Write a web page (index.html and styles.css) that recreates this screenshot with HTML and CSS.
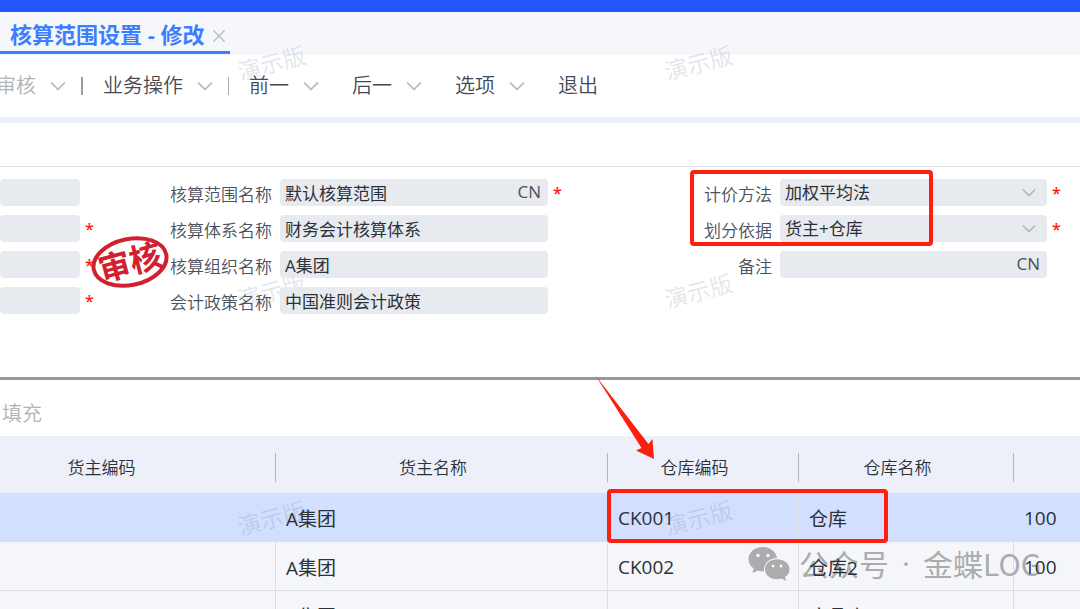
FILE: index.html
```
<!DOCTYPE html>
<html lang="zh-CN">

<head>
  <meta charset="UTF-8">
  <meta name="viewport" content="width=device-width, initial-scale=1.0">
  <title>核算范围设置 - 修改</title>
  <link rel="stylesheet" href="styles.css">
</head>

<body>
  <svg class="symbols" aria-hidden="true">
    <symbol id="chevron" viewBox="0 0 16 10">
      <path d="M1 1.5 L8 8.5 L15 1.5" fill="none" stroke="currentColor" stroke-width="1.8" />
    </symbol>
  </svg>

  <div class="topbar"></div>

  <nav class="tabs">
    <div class="tab">
      <a href="#" class="tab-title">核算范围设置 - 修改</a>
      <button type="button" class="tab-close" aria-label="关闭">
        <svg viewBox="0 0 12 12" width="12" height="12">
          <path d="M0.5 0.5 L11.5 11.5 M11.5 0.5 L0.5 11.5" stroke="currentColor" stroke-width="1.3" />
        </svg>
      </button>
    </div>
  </nav>

  <div class="toolbar">
    <button type="button" class="tool disabled">审核<svg class="chevron"><use href="#chevron" /></svg></button>
    <span class="sep dark"></span>
    <button type="button" class="tool">业务操作<svg class="chevron"><use href="#chevron" /></svg></button>
    <span class="sep"></span>
    <button type="button" class="tool">前一<svg class="chevron"><use href="#chevron" /></svg></button>
    <button type="button" class="tool">后一<svg class="chevron"><use href="#chevron" /></svg></button>
    <button type="button" class="tool">选项<svg class="chevron"><use href="#chevron" /></svg></button>
    <button type="button" class="tool">退出</button>
  </div>

  <main>
    <form class="form">
      <div class="form-col codes">
        <div class="field"><div class="box"><input type="text" aria-label="核算范围编码" readonly></div></div>
        <div class="field"><div class="box"><input type="text" aria-label="核算体系编码" readonly></div><span class="star">*</span></div>
        <div class="field"><div class="box"><input type="text" aria-label="核算组织编码" readonly></div><span class="star">*</span></div>
        <div class="field"><div class="box"><input type="text" aria-label="会计政策编码" readonly></div><span class="star">*</span></div>
      </div>

      <div class="form-col names">
        <div class="field">
          <label for="scope">核算范围名称</label>
          <div class="box"><input type="text" id="scope" value="默认核算范围" readonly><button type="button" class="lang">CN</button></div>
          <span class="star">*</span>
        </div>
        <div class="field">
          <label for="system">核算体系名称</label>
          <div class="box"><input type="text" id="system" value="财务会计核算体系" readonly></div>
        </div>
        <div class="field">
          <label for="org">核算组织名称</label>
          <div class="box"><input type="text" id="org" value="A集团" readonly></div>
        </div>
        <div class="field">
          <label for="policy">会计政策名称</label>
          <div class="box"><input type="text" id="policy" value="中国准则会计政策" readonly></div>
        </div>
      </div>

      <div class="form-col options">
        <div class="field">
          <label for="method">计价方法</label>
          <div class="box">
            <select id="method"><option>加权平均法</option></select>
            <svg class="chevron"><use href="#chevron" /></svg>
          </div>
          <span class="star">*</span>
        </div>
        <div class="field">
          <label for="basis">划分依据</label>
          <div class="box">
            <select id="basis"><option>货主+仓库</option></select>
            <svg class="chevron"><use href="#chevron" /></svg>
          </div>
          <span class="star">*</span>
        </div>
        <div class="field">
          <label for="remark">备注</label>
          <div class="box"><input type="text" id="remark" readonly><button type="button" class="lang">CN</button></div>
        </div>
      </div>
    </form>

    <section class="entries">
      <div class="entry-tools">
        <button type="button" class="tool disabled">填充</button>
      </div>
      <table>
        <colgroup>
          <col class="c-owner-code">
          <col class="c-owner-name">
          <col class="c-wh-code">
          <col class="c-wh-name">
          <col class="c-org">
        </colgroup>
        <thead>
          <tr>
            <th>货主编码</th>
            <th>货主名称</th>
            <th>仓库编码</th>
            <th>仓库名称</th>
            <th></th>
          </tr>
        </thead>
        <tbody>
          <tr class="selected">
            <td></td>
            <td><span>A集团</span></td>
            <td><span>CK001</span></td>
            <td><span>仓库</span></td>
            <td><span>100</span></td>
          </tr>
          <tr>
            <td></td>
            <td><span>A集团</span></td>
            <td><span>CK002</span></td>
            <td><span>仓库2</span></td>
            <td><span>100</span></td>
          </tr>
          <tr>
            <td></td>
            <td><span>A集团</span></td>
            <td><span>CK003</span></td>
            <td><span>废品库</span></td>
            <td><span>100</span></td>
          </tr>
        </tbody>
      </table>
    </section>
  </main>

  <!-- demo watermark -->
  <span class="watermark left row1">演示版</span>
  <span class="watermark right row1">演示版</span>
  <span class="watermark left row2">演示版</span>
  <span class="watermark right row2">演示版</span>
  <span class="watermark left row3">演示版</span>
  <span class="watermark right row3">演示版</span>

  <!-- audit stamp -->
  <svg class="stamp" viewBox="0 0 80 54" width="80" height="54">
    <ellipse cx="40" cy="27" rx="37" ry="23" fill="none" stroke="#d3202f" stroke-width="4" transform="rotate(-12 40 27)" />
    <text x="40" y="39" text-anchor="middle" transform="rotate(-15 40 27)">审核</text>
  </svg>

  <!-- annotations -->
  <div class="mark mark-form"></div>
  <div class="mark mark-table"></div>
  <svg class="arrow" viewBox="0 0 60 84" width="60" height="84">
    <path d="M0.5 0.5 L53.5 69 L57.5 64 L59 84 L41 75.5 L46.5 73 Z" fill="#ff1f10" />
  </svg>

  <div class="account">
    <svg viewBox="0 0 42 34" width="42" height="34">
      <path d="M15 0 C6.5 0 0.5 5.5 0.5 12.3 C0.5 16.2 2.5 19.3 5.8 21.6 L4.5 26 L9.6 23.6 C11.8 24.3 14 24.6 16 24.5 C15 17 21 11 29 11 C28 4.5 22 0 15 0 Z" />
      <path d="M29 12.2 C22 12.2 17 16.6 17 22.3 C17 28 22 32.2 29 32.2 C30.7 32.2 32.3 31.9 33.7 31.5 L38 34 L37 30 C39.8 28.2 41.5 25.5 41.5 22.3 C41.5 16.6 36 12.2 29 12.2 Z" />
      <g class="eyes">
        <circle cx="10" cy="8.5" r="1.8" />
        <circle cx="20" cy="8.5" r="1.8" />
        <circle cx="25" cy="19" r="1.5" />
        <circle cx="33" cy="19" r="1.5" />
      </g>
    </svg>
    <span>公众号</span>
    <span class="dot">·</span>
    <span>金蝶LOG</span>
  </div>
</body>

</html>
```

FILE: styles.css
```
* {
  box-sizing: border-box;
}

html,
body {
  height: 100%;
}

body {
  position: relative;
  margin: 0;
  overflow: hidden;
  background-color: #fff;
  color: #2c3138;
  font-family: "Open Sans", "Noto Sans CJK SC", sans-serif;
  font-size: 17px;
  font-weight: 350;
}

button,
input,
select {
  margin: 0;
  padding: 0;
  border: 0;
  background: none;
  color: inherit;
  font: inherit;
}

.symbols {
  position: absolute;
  width: 0;
  height: 0;
}

.topbar {
  height: 12px;
  background-color: #2356ff;
}

/* tabs */
.tabs {
  display: flex;
  height: 43px;
  background-color: #f5f7fb;
}

.tab {
  display: flex;
  align-items: center;
  gap: 8px;
  height: 42px;
  padding: 4px 5px 0 10px;
  border-bottom: 3px solid #3d7eff;
}

.tab-title {
  color: #3d7eff;
  font-size: 22px;
  font-weight: bold;
  line-height: 30px;
  text-decoration: none;
  white-space: nowrap;
}

.tab-close {
  display: flex;
  padding-top: 4px;
  color: #b4b8bf;
}

/* toolbar */
.toolbar {
  display: flex;
  align-items: center;
  height: 68px;
  margin-left: -4px;
  border-bottom: 6px solid #edf1f8;
}

.tool {
  display: flex;
  align-items: center;
  gap: 14px;
  color: #444a54;
  font-size: 20px;
  line-height: 28px;
  white-space: nowrap;
}

.tool + .tool {
  margin-left: 33px;
}

.tool.disabled {
  color: #b0b3b8;
}

.chevron {
  width: 16px;
  height: 10px;
  color: #bcc1c9;
}

.sep {
  width: 1px;
  height: 18px;
  margin: 0 20px 0 15px;
  background-color: #a9adb3;
}

.sep.dark {
  width: 2px;
  background-color: #9a9ea4;
}

/* form */
.form {
  display: grid;
  grid-template-columns: 170px 500px 1fr;
  height: 211px;
  margin-top: 43px;
  padding: 12px 18px 0 0;
  border-top: 1px solid #dfe4ea;
}

.form-col {
  display: flex;
  flex-direction: column;
  gap: 9px;
}

.field {
  display: flex;
  align-items: center;
  height: 27px;
}

.field label {
  flex: none;
  width: 102px;
  margin-right: 8px;
  padding-top: 4px;
  color: #4b515d;
  line-height: 24px;
  text-align: right;
}

.box {
  position: relative;
  z-index: 2;
  display: flex;
  align-items: center;
  height: 27px;
  padding: 0 7px 0 5px;
  border-radius: 4px;
  background-color: #e7eaef;
  font-weight: 400;
}

.box input,
.box select {
  flex: 1;
  width: 100%;
  min-width: 0;
  height: 27px;
  appearance: none;
  outline: none;
}

.box .chevron {
  position: absolute;
  right: 11px;
  width: 14px;
  height: 9px;
  color: #b3b7bd;
  pointer-events: none;
}

.codes .box {
  width: 80px;
}

.names .box {
  width: 268px;
}

.options .box {
  flex: 1;
}

.options .field:last-child {
  margin-right: 15px;
}

.lang {
  padding-bottom: 3px;
  color: #4b515d;
}

.star {
  width: 10px;
  margin-left: 5px;
  color: #ff1a10;
  font-size: 16px;
  font-weight: 600;
  line-height: 20px;
}

/* entries */
.entries {
  border-top: 3px solid #999;
}

.entry-tools {
  display: flex;
  align-items: center;
  height: 56px;
  padding: 12px 2px 0;
}

table {
  width: 1250px;
  margin-left: -73px;
  border-collapse: separate;
  border-spacing: 0;
  table-layout: fixed;
}

.c-owner-code {
  width: 349px;
}

.c-owner-name {
  width: 332px;
}

.c-wh-code {
  width: 191px;
}

.c-wh-name {
  width: 215px;
}

th {
  height: 57px;
  padding: 3px 18px 0 0;
  background: linear-gradient(#b4b7bc, #b4b7bc) right 17px / 1px 29px no-repeat #edf0f8;
  font-weight: inherit;
}

th:first-child {
  padding-right: 0;
}

td {
  height: 49px;
  padding: 1px 10px 0;
  border-right: 1px solid #dcdee1;
  border-bottom: 1px solid #dcdee1;
  background-color: #f5f6f9;
  font-size: 19px;
  font-weight: 400;
}

td span {
  position: relative;
  z-index: 2;
}

.selected td {
  background-color: #d3dfff;
}

/* overlays */
.watermark {
  position: absolute;
  z-index: 1;
  color: rgba(90, 100, 125, 0.17);
  font-size: 23px;
  font-weight: 400;
  line-height: 30px;
  transform: rotate(-15deg);
}

.watermark.left {
  left: 237px;
}

.watermark.right {
  left: 664px;
}

.row1 {
  top: 48px;
}

.row2 {
  top: 276px;
}

.row3 {
  top: 503px;
}

.stamp {
  position: absolute;
  top: 235px;
  left: 90px;
  z-index: 3;
}

.stamp text {
  fill: #d3202f;
  font-size: 32px;
  font-weight: bold;
}

.mark {
  position: absolute;
  z-index: 4;
  border: 4px solid #ff1f10;
  border-radius: 4px;
}

.mark-form {
  top: 170px;
  left: 690px;
  width: 243px;
  height: 76px;
}

.mark-table {
  top: 489px;
  left: 607px;
  width: 281px;
  height: 54px;
}

.arrow {
  position: absolute;
  top: 375px;
  left: 595px;
  z-index: 4;
}

.account {
  position: absolute;
  top: 541px;
  left: 748px;
  z-index: 1;
  display: flex;
  align-items: center;
  gap: 9px;
  color: #abacae;
  font-family: "Noto Sans CJK SC", sans-serif;
  font-size: 30px;
  font-weight: 400;
  line-height: 44px;
  white-space: nowrap;
}

.account svg {
  margin-top: 2px;
  fill: #abacae;
}

.account .dot {
  width: 16px;
  font-family: "Open Sans", sans-serif;
  text-align: center;
}

.account .eyes {
  fill: #f5f6f9;
}
```
